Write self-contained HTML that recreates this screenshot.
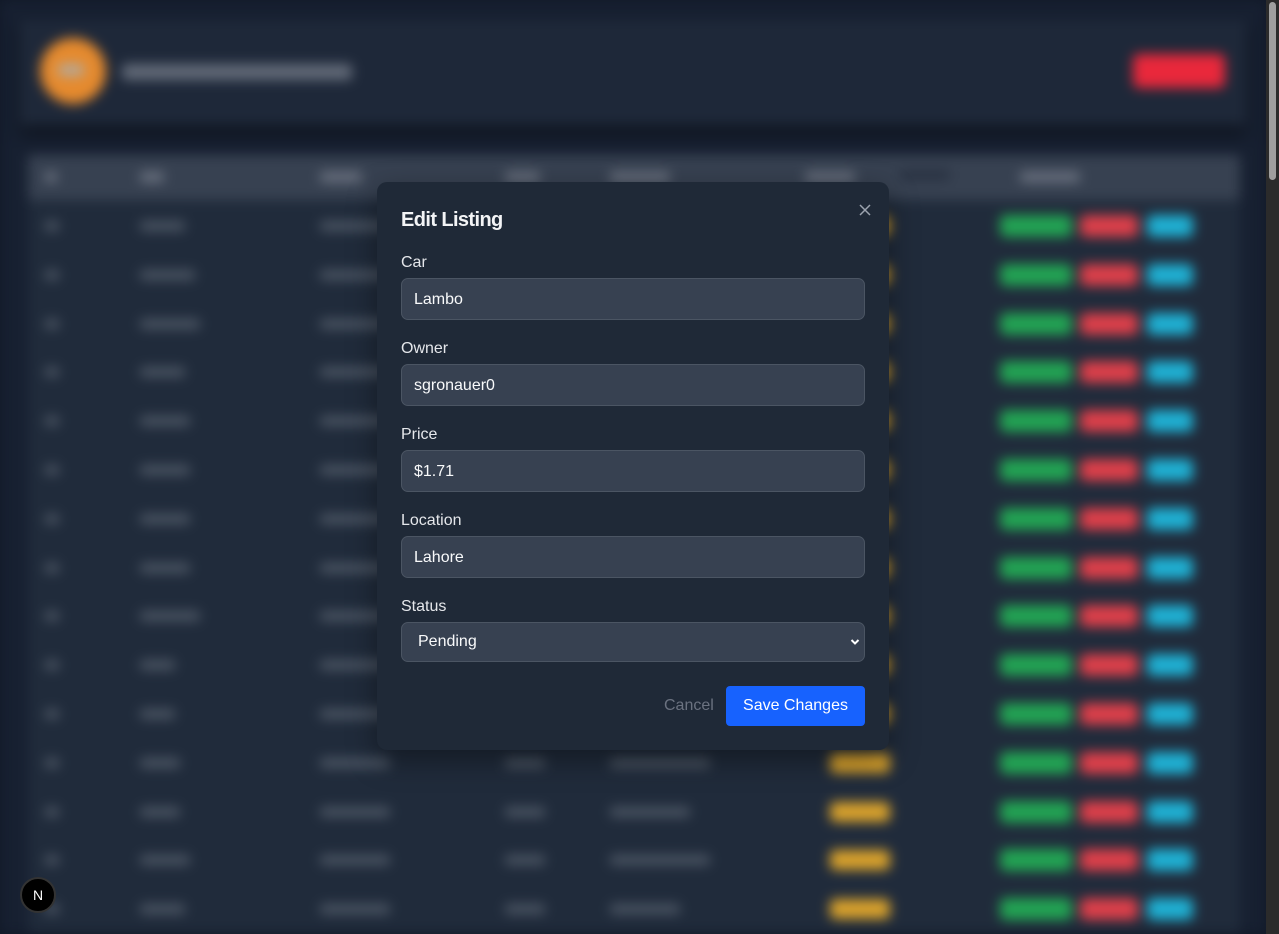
<!DOCTYPE html>
<html><head><meta charset="utf-8"><style>
*{box-sizing:border-box;margin:0;padding:0}
html,body{width:1279px;height:934px;overflow:hidden;background:#111827;font-family:"Liberation Sans",sans-serif}
#bg{position:absolute;left:0;top:0;width:1266px;height:934px;background:#172031;filter:blur(6px);overflow:hidden}
.hdr{position:absolute;left:20px;top:20px;width:1226px;height:105px;background:#1e2839;box-shadow:0 8px 14px rgba(0,0,0,.45)}
.av{position:absolute;left:40px;top:38px;width:66px;height:66px;border-radius:50%;background:#e58a2e}
.av i{position:absolute;left:18px;top:26px;width:26px;height:12px;background:#b4a99a;border-radius:4px}
.title{position:absolute;left:122px;top:64px;width:230px;height:16px;background:#626a78;border-radius:4px}
.logout{position:absolute;left:1133px;top:54px;width:92px;height:34px;background:#e9283b;border-radius:6px}
.tbl{position:absolute;left:28px;top:155px;width:1212px;height:800px;background:#202b3b}
.th{position:absolute;left:28px;top:155px;width:1212px;height:45px;background:#374151}
.b{position:absolute;height:10px;border-radius:3px;background:#4b5563}
.hb{background:#6b7280}
.st{position:absolute;left:830px;width:60px;height:20px;background:#d9a22c;border-radius:5px}
.g{position:absolute;left:1000px;width:72px;height:22px;background:#22a353;border-radius:5px}
.r{position:absolute;left:1080px;width:58px;height:22px;background:#dc3f4a;border-radius:5px}
.c{position:absolute;left:1147px;width:46px;height:22px;background:#1fb0d3;border-radius:5px}
.sb{position:absolute;left:1266px;top:0;width:13px;height:934px;background:#2b2b2b}
.sb i{position:absolute;left:3px;top:2px;width:7px;height:178px;background:#9f9f9f;border-radius:4px}
.modal{position:absolute;left:377px;top:182px;width:512px;height:568px;background:#1f2937;border-radius:10px;color:#f3f4f6;box-shadow:0 10px 30px rgba(0,0,0,.4)}
.modal h2{position:absolute;left:24px;top:27px;font-size:20px;font-weight:bold;letter-spacing:-.6px}
.x{position:absolute;left:480px;top:20px;width:16px;height:16px}
.lb{position:absolute;left:24px;font-size:16px;color:#e5e7eb}
.in{position:absolute;left:24px;width:464px;height:42px;background:#374151;border:1px solid #4b5563;border-radius:7px;font-size:16px;padding:12px 0 0 12px;color:#f9fafb}
.cancel{position:absolute;left:287px;top:515px;font-size:16px;color:#6b7280}
.save{position:absolute;left:349px;top:504px;width:139px;height:40px;background:#1762fe;border-radius:4px;color:#fff;font-size:16px;text-align:center;line-height:40px}
.n{position:absolute;left:20px;top:877px;width:36px;height:36px;border-radius:50%;background:#000;border:2px solid #333;color:#fff;font-size:14px;text-align:center;line-height:32px}
</style></head><body>
<div id="bg">
<div class="hdr"></div><div class="av"><i></i></div><div class="title"></div><div class="logout"></div>
<div class="tbl"></div><div class="th"></div>
<div class="b hb" style="left:45px;top:172px;width:12px"></div>
<div class="b hb" style="left:140px;top:172px;width:24px"></div>
<div class="b hb" style="left:320px;top:172px;width:42px"></div>
<div class="b hb" style="left:505px;top:172px;width:35px"></div>
<div class="b hb" style="left:610px;top:172px;width:60px"></div>
<div class="b hb" style="left:805px;top:172px;width:50px"></div>
<div class="b" style="left:900px;top:170px;width:50px;background:#283141"></div>
<div class="b hb" style="left:1020px;top:172px;width:60px"></div>
<div id="rows"></div>
</div>
<div class="sb"><i></i></div>
<div class="modal">
<h2>Edit Listing</h2>
<svg class="x" viewBox="0 0 16 16"><path d="M3 3L13 13M13 3L3 13" stroke="#9ca3af" stroke-width="1.5"/></svg>
<div class="lb" style="top:72px">Car</div><div class="in" style="top:96px">Lambo</div>
<div class="lb" style="top:158px">Owner</div><div class="in" style="top:182px">sgronauer0</div>
<div class="lb" style="top:244px">Price</div><div class="in" style="top:268px">$1.71</div>
<div class="lb" style="top:330px">Location</div><div class="in" style="top:354px">Lahore</div>
<div class="lb" style="top:416px">Status</div><div class="in" style="top:440px;height:40px;padding:10px 0 0 16px">Pending<svg style="position:absolute;right:4px;top:15px" width="10" height="8" viewBox="0 0 10 8"><path d="M1.5 2L5 5.5L8.5 2" stroke="#fff" stroke-width="2" fill="none"/></svg></div>
<div class="cancel">Cancel</div><div class="save">Save Changes</div>
</div>
<div class="n">N</div>
<script>
var h='',ws=[[45,120],[55,100],[60,100],[45,80],[50,110],[50,70],[50,90],[50,80],[60,100],[35,40],[35,60],[40,100],[40,80],[50,100],[45,70]];
for(var i=0;i<15;i++){var y=226+i*48.8;
h+='<div class="b" style="left:45px;top:'+(y-5)+'px;width:14px"></div>';
h+='<div class="b" style="left:140px;top:'+(y-5)+'px;width:'+ws[i][0]+'px"></div>';
h+='<div class="b" style="left:320px;top:'+(y-5)+'px;width:70px"></div>';
h+='<div class="b" style="left:505px;top:'+(y-5)+'px;width:40px"></div>';
h+='<div class="b" style="left:610px;top:'+(y-5)+'px;width:'+ws[i][1]+'px"></div>';
h+='<div class="st" style="top:'+(y-10)+'px"></div><div class="g" style="top:'+(y-11)+'px"></div><div class="r" style="top:'+(y-11)+'px"></div><div class="c" style="top:'+(y-11)+'px"></div>';}
document.getElementById('rows').innerHTML=h;
</script>
</body></html>
